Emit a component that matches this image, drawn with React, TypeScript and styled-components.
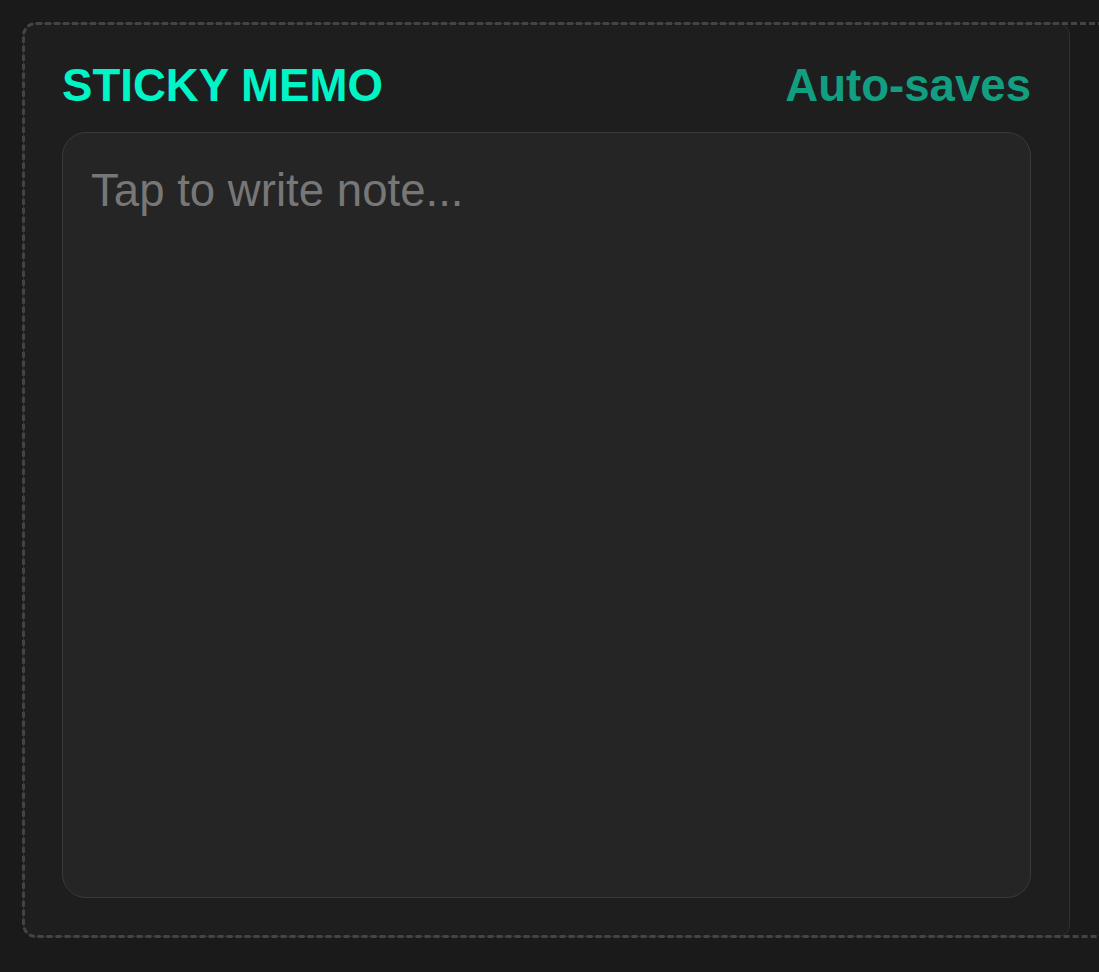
import React from "react";
import styled, { createGlobalStyle } from "styled-components";

const GlobalStyle = createGlobalStyle`
  html, body {
    margin: 0;
    padding: 0;
    background: #1a1a1a;
    overflow: hidden;
  }
  body {
    font-family: "Liberation Sans", Arial, sans-serif;
  }
  * { box-sizing: border-box; }
`;

const Page = styled.div`
  padding: 23px 0 0 23px;
  width: 100vw;
  height: 100vh;
`;

const Board = styled.div`
  position: relative;
  display: flex;
  width: 1200px;
  &::after {
    content: "";
    position: absolute;
    inset: -1px 0 -1px -1px;
    border: 3px dashed #444444;
    border-radius: 14px;
    pointer-events: none;
  }
`;

const Card = styled.section`
  width: 1047px;
  height: 914px;
  flex: none;
  display: flex;
  flex-direction: column;
  padding: 39px 38px 38px;
  background: #1e1e1e;
  border: 1px solid #303030;
  border-radius: 12px;
`;

const Header = styled.header`
  display: flex;
  justify-content: space-between;
  align-items: baseline;
  line-height: 1;
  margin-bottom: 23px;
`;

const Title = styled.h2`
  margin: 0;
  font-size: 45.6px;
  font-weight: 700;
  color: #00f5c6;
`;

const Status = styled.span`
  font-size: 45.6px;
  font-weight: 700;
  color: #129e80;
`;

const Note = styled.textarea`
  flex: 1;
  width: 100%;
  resize: none;
  outline: none;
  background: #252525;
  border: 1px solid #3a3a3a;
  border-radius: 24px;
  padding: 32px 28px;
  font-family: "Liberation Sans", Arial, sans-serif;
  font-size: 45.6px;
  color: #dddddd;
  &::placeholder {
    color: #777777;
  }
`;

export default function App() {
  return (
    <>
      <GlobalStyle />
      <Page>
        <Board>
          <Card>
            <Header>
              <Title>STICKY MEMO</Title>
              <Status>Auto-saves</Status>
            </Header>
            <Note placeholder="Tap to write note..." />
          </Card>
        </Board>
      </Page>
    </>
  );
}
